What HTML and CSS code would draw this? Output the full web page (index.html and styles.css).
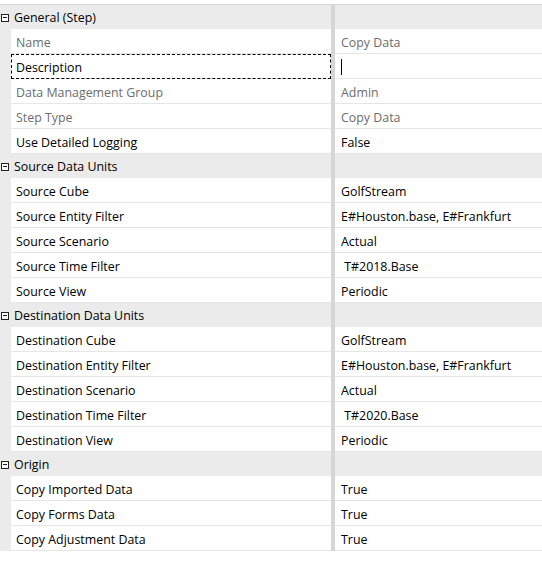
FILE: index.html
```html
<!DOCTYPE html>
<html>
<head>
<meta charset="utf-8">
<link rel="stylesheet" href="styles.css">
</head>
<body>
<div class="grid">
  <div class="cat"><div class="gut"><span class="minus"></span></div><div class="clabel">General (Step)</div><div class="split"></div><div class="cval"></div></div>
  <div class="row ro"><div class="gut"></div><div class="label">Name</div><div class="split"></div><div class="val">Copy Data</div></div>
  <div class="row"><div class="gut"></div><div class="label focus">Description</div><div class="split"></div><div class="val"><span class="caret"></span></div></div>
  <div class="row ro"><div class="gut"></div><div class="label">Data Management Group</div><div class="split"></div><div class="val">Admin</div></div>
  <div class="row ro"><div class="gut"></div><div class="label">Step Type</div><div class="split"></div><div class="val">Copy Data</div></div>
  <div class="row"><div class="gut"></div><div class="label">Use Detailed Logging</div><div class="split"></div><div class="val">False</div></div>

  <div class="cat"><div class="gut"><span class="minus"></span></div><div class="clabel">Source Data Units</div><div class="split"></div><div class="cval"></div></div>
  <div class="row"><div class="gut"></div><div class="label">Source Cube</div><div class="split"></div><div class="val">GolfStream</div></div>
  <div class="row"><div class="gut"></div><div class="label">Source Entity Filter</div><div class="split"></div><div class="val">E#Houston.base, E#Frankfurt</div></div>
  <div class="row"><div class="gut"></div><div class="label">Source Scenario</div><div class="split"></div><div class="val">Actual</div></div>
  <div class="row"><div class="gut"></div><div class="label">Source Time Filter</div><div class="split"></div><div class="val"> T#2018.Base</div></div>
  <div class="row"><div class="gut"></div><div class="label">Source View</div><div class="split"></div><div class="val">Periodic</div></div>

  <div class="cat"><div class="gut"><span class="minus"></span></div><div class="clabel">Destination Data Units</div><div class="split"></div><div class="cval"></div></div>
  <div class="row"><div class="gut"></div><div class="label">Destination Cube</div><div class="split"></div><div class="val">GolfStream</div></div>
  <div class="row"><div class="gut"></div><div class="label">Destination Entity Filter</div><div class="split"></div><div class="val">E#Houston.base, E#Frankfurt</div></div>
  <div class="row"><div class="gut"></div><div class="label">Destination Scenario</div><div class="split"></div><div class="val">Actual</div></div>
  <div class="row"><div class="gut"></div><div class="label">Destination Time Filter</div><div class="split"></div><div class="val"> T#2020.Base</div></div>
  <div class="row"><div class="gut"></div><div class="label">Destination View</div><div class="split"></div><div class="val">Periodic</div></div>

  <div class="cat"><div class="gut"><span class="minus"></span></div><div class="clabel">Origin</div><div class="split"></div><div class="cval"></div></div>
  <div class="row"><div class="gut"></div><div class="label">Copy Imported Data</div><div class="split"></div><div class="val">True</div></div>
  <div class="row"><div class="gut"></div><div class="label">Copy Forms Data</div><div class="split"></div><div class="val">True</div></div>
  <div class="row"><div class="gut"></div><div class="label">Copy Adjustment Data</div><div class="split"></div><div class="val">True</div></div>
</div>
</body>
</html>
```
FILE: styles.css
```css
html, body {
  margin: 0;
  padding: 0;
  background: #ffffff;
}
body {
  font-family: "Open Sans", "Noto Sans", sans-serif;
  font-size: 12.4px;
  color: #000000;
}
.grid {
  margin-top: 4px;
  border-top: 1px solid #d6d6d6;
  display: flex;
  flex-direction: column;
}
.cat, .row {
  display: flex;
  align-items: stretch;
}
.cat {
  height: 24px;
  background: #ebebeb;
}
.row {
  height: 25px;
}
.gut {
  width: 11px;
  flex: none;
  background: #ebebeb;
  display: flex;
  align-items: center;
}
.minus {
  width: 8px;
  height: 8px;
  border: 1px solid #222222;
  box-sizing: border-box;
  margin-left: 1px;
  margin-top: 1px;
  position: relative;
  background: #ffffff;
}
.minus::after {
  content: "";
  position: absolute;
  left: 1px;
  right: 1px;
  top: 2px;
  height: 1px;
  background: #222222;
}
.clabel {
  width: 317px;
  flex: none;
  padding-left: 3px;
  padding-top: 1px;
  line-height: 23px;
  white-space: nowrap;
}
.split {
  width: 4px;
  flex: none;
  background: #d6d6d6;
}
.cval {
  flex: 1;
}
.label {
  width: 320px;
  flex: none;
  box-sizing: border-box;
  padding-left: 5px;
  padding-top: 3px;
  line-height: 21px;
  border-bottom: 1px solid #e6e6e6;
  white-space: nowrap;
}
.val {
  flex: 1;
  box-sizing: border-box;
  padding-left: 6px;
  padding-top: 3px;
  line-height: 21px;
  border-bottom: 1px solid #e6e6e6;
  white-space: pre;
  display: flex;
  align-items: center;
}
.ro .label, .ro .val {
  color: #6d6d6d;
}
.focus {
  outline: 1px dashed #000000;
  outline-offset: -1px;
}
.caret {
  width: 1px;
  height: 16px;
  background: #000000;
  margin-top: -2px;
}
```
